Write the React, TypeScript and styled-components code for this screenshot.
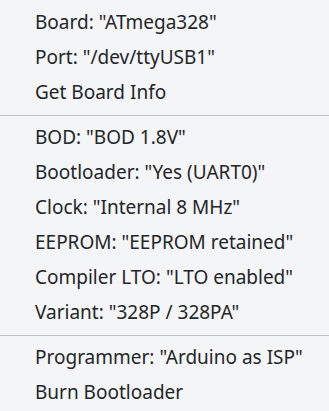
import React from "react";
import styled, { createGlobalStyle } from "styled-components";

const GlobalStyle = createGlobalStyle`
  html, body {
    margin: 0;
    padding: 0;
    background: #f4f5f6;
  }
`;

const Menu = styled.div`
  width: 329px;
  height: 411px;
  background: #f4f5f6;
  font-family: "Noto Sans", "Open Sans", sans-serif;
  font-size: 19px;
  color: #232629;
  overflow: hidden;
`;

const Group = styled.div<{ $first?: boolean }>`
  display: flex;
  flex-direction: column;
  padding-top: ${(p) => (p.$first ? "5px" : "4px")};
`;

const Item = styled.div`
  height: 35px;
  line-height: 35px;
  padding-left: 35px;
  white-space: nowrap;
`;

const Separator = styled.div`
  height: 1px;
  background: #bdbfc2;
  margin-top: 5px;
`;

const groups = [
  ['Board: "ATmega328"', 'Port: "/dev/ttyUSB1"', "Get Board Info"],
  [
    'BOD: "BOD 1.8V"',
    'Bootloader: "Yes (UART0)"',
    'Clock: "Internal 8 MHz"',
    'EEPROM: "EEPROM retained"',
    'Compiler LTO: "LTO enabled"',
    'Variant: "328P / 328PA"',
  ],
  ['Programmer: "Arduino as ISP"', "Burn Bootloader"],
];

export default function App() {
  return (
    <Menu>
      <GlobalStyle />
      {groups.map((items, i) => (
        <React.Fragment key={i}>
          {i > 0 && <Separator />}
          <Group $first={i === 0}>
            {items.map((label) => (
              <Item key={label}>{label}</Item>
            ))}
          </Group>
        </React.Fragment>
      ))}
    </Menu>
  );
}
